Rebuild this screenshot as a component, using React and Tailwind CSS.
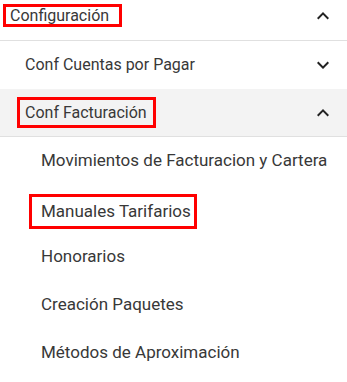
const font = { fontFamily: "Roboto, 'Liberation Sans', sans-serif" };

const Chevron = ({ up }) => (
  <svg width="24" height="24" viewBox="0 0 24 24" className="fill-[#222]">
    {up ? (
      <path d="M12 8l-6 6 1.41 1.41L12 10.83l4.59 4.58L18 14z" />
    ) : (
      <path d="M16.59 8.59L12 13.17 7.41 8.59 6 10l6 6 6-6z" />
    )}
  </svg>
);

const items = [
  { label: "Movimientos de Facturacion y Cartera" },
  { label: "Manuales Tarifarios", marked: true },
  { label: "Honorarios" },
  { label: "Creación Paquetes" },
  { label: "Métodos de Aproximación" },
];

const App = () => {
  return (
    <div className="w-[347px] h-[382px] bg-white overflow-hidden text-[#383838]" style={font}>
      {/* Configuración */}
      <div className="h-[41px] flex items-start justify-between border-b border-[#e0e0e0] pl-[3px] pr-3">
        <span className="mt-[4px] inline-block border-[3px] border-[#f00] pl-[4px] pr-[10px] h-[23px] leading-[17px] text-[16px]">
          Configuración
        </span>
        <span className="mt-[4px]">
          <Chevron up />
        </span>
      </div>

      {/* Conf Cuentas por Pagar */}
      <div className="h-12 flex items-center justify-between pl-[25px] pr-3">
        <span className="text-[16px]">Conf Cuentas por Pagar</span>
        <Chevron />
      </div>

      {/* Conf Facturación */}
      <div className="h-12 flex items-center justify-between bg-[#f3f3f3] border-b border-[#e0e0e0] pl-[17px] pr-3">
        <span className="inline-block border-[3px] border-[#f00] pl-[5px] pr-[6px] h-[31px] leading-[25px] text-[16px]">
          Conf Facturación
        </span>
        <Chevron up />
      </div>

      {/* Sub items */}
      <div className="flex flex-col">
        {items.map((item) => (
          <div key={item.label} className="h-12 flex items-center pl-[29px]">
            {item.marked ? (
              <span className="inline-block border-[3px] border-[#f00] pl-[9px] pr-[3px] h-[35px] leading-[29px] text-[17px] mt-[5px]">
                {item.label}
              </span>
            ) : (
              <span className="pl-[12px] text-[17px]">{item.label}</span>
            )}
          </div>
        ))}
      </div>
    </div>
  );
};

export default App;
